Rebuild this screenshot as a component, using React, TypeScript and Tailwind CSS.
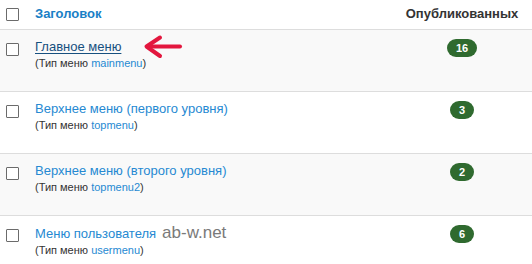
import React from 'react';

interface MenuRow {
  title: string;
  type: string;
  count: number;
  active?: boolean;
  watermark?: string;
}

const ROWS: MenuRow[] = [
  { title: 'Главное меню', type: 'mainmenu', count: 16, active: true },
  { title: 'Верхнее меню (первого уровня)', type: 'topmenu', count: 3 },
  { title: 'Верхнее меню (второго уровня)', type: 'topmenu2', count: 2 },
  { title: 'Меню пользователя', type: 'usermenu', count: 6, watermark: 'ab-w.net' },
];

const Checkbox = () => (
  <span className="block w-[13px] h-[13px] border border-[#6b6b6b] bg-white rounded-[1px]" />
);

const Badge = ({ value }: { value: number }) => (
  <span className="inline-flex items-center justify-center h-[18px] px-[9px] rounded-full bg-[#2f6a2f] text-white text-[11px] font-bold leading-none">
    {value}
  </span>
);

export default function App() {
  return (
    <div className="relative w-[532px] h-[264px] overflow-hidden bg-white font-['Liberation_Sans',Arial,sans-serif] text-[#333]">
      {/* Header */}
      <div className="flex h-[30px] border-b border-[#dddddd]">
        <div className="w-[35px] pl-[6px] pt-[8px]">
          <Checkbox />
        </div>
        <div className="flex-1 pt-[5px] text-[13px] leading-[18px] font-bold text-[#1a7fc6]">Заголовок</div>
        <div className="w-[140px] pt-[5px] text-center text-[13px] leading-[18px] font-bold text-[#333]">
          Опубликованных
        </div>
      </div>

      {/* Rows */}
      {ROWS.map((row, i) => (
        <div
          key={row.type}
          className={`flex h-[62px] border-b border-[#dddddd] ${i % 2 === 0 ? 'bg-[#f9f9f9]' : 'bg-white'}`}
        >
          <div className="w-[35px] pl-[6px] pt-[13px]">
            <Checkbox />
          </div>
          <div className="flex-1 pt-[8px]">
            <div className="text-[13px] leading-[18px]">
              <span className={row.active ? 'text-[#17507f] underline underline-offset-2' : 'text-[#2689d2]'}>
                {row.title}
              </span>
              {row.watermark && (
                <span className="ml-[6px] text-[17px] leading-none text-[#7a7a7a]">{row.watermark}</span>
              )}
            </div>
            <div className="text-[11px] leading-[15px] text-[#333]">
              (Тип меню <span className="text-[#2689d2]">{row.type}</span>)
            </div>
          </div>
          <div className="w-[140px] pt-[9px] flex justify-center items-start">
            <Badge value={row.count} />
          </div>
        </div>
      ))}

      {/* Red annotation arrow */}
      <svg
        className="absolute left-[140px] top-[32px]"
        width="44"
        height="30"
        viewBox="0 0 44 30"
        fill="none"
        stroke="#e3173e"
        strokeWidth="4"
        strokeLinecap="round"
        strokeLinejoin="round"
      >
        <path d="M40 14.5H8" />
        <path d="M20 5.5L6.5 14.5L20 24" />
      </svg>
    </div>
  );
}
